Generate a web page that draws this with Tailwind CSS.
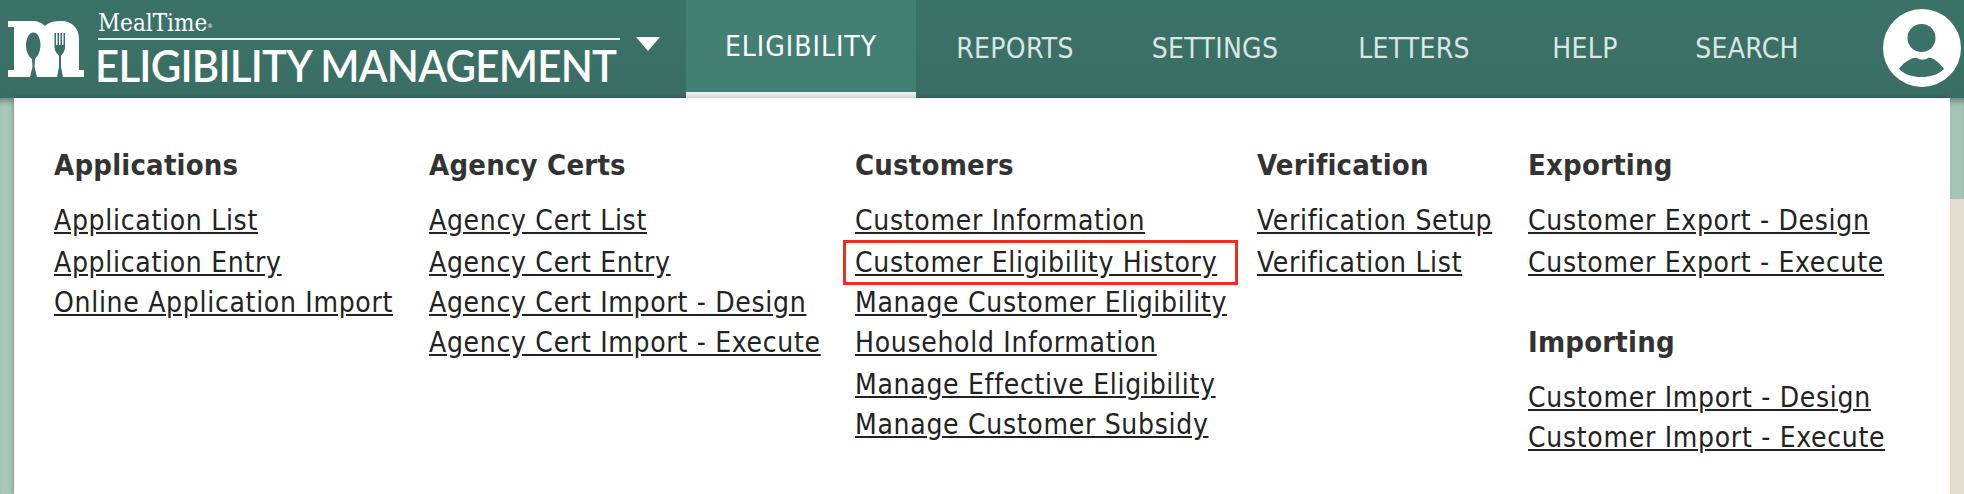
<!DOCTYPE html>
<html>
<head>
  <meta charset="UTF-8">
  <title>Eligibility Management</title>
  <script src="https://cdn.jsdelivr.net/npm/@tailwindcss/browser@4"></script>
</head>
<body class="bg-white font-['DejaVu_Sans',sans-serif]">
<div class="w-[1964px] h-[494px] overflow-hidden flex flex-col">
  <header class="h-[98px] shrink-0 flex bg-gradient-to-b from-[#3b7268] to-[#3a6e65] text-[#dce6e3]">
    <a class="w-[686px] flex items-start">
      <svg class="ml-[8px] mt-[21px] w-[76px] h-[56px]" viewBox="0 0 76 56">
        <path fill="#fff" fill-rule="evenodd" d="M0 0H24C30 0 34 2 37 5C41 1 47 0 53 0C64 0 71 7 71 18V49H76V56H0V49H6V6H0Z
          M25.3 11.5C30 11.5 32.5 18 32.5 24C32.5 31 29 36 27 38L26.5 46L29 56H22L24.5 46L24 38C21 36 18 31 18 24C18 18 21 11.5 25.3 11.5Z
          M46.5 12H48V24H49.5V12H51V24H52.5V12H54V24H55.5V12H57V26C57 31 54 33 53 35L53 46L55 56H49L51 46L51 35C50 33 46.5 31 46.5 26Z"/>
      </svg>
      <div class="ml-[14px] w-[522px] flex flex-col text-white">
        <div class="h-[25px] mt-[11px] font-['DejaVu_Serif',serif] [font-stretch:condensed] text-[24px] leading-[25px] whitespace-nowrap">MealTime<sup class="text-[6px]">®</sup></div>
        <div class="h-[2px] mt-[2px] bg-[#e8f0ee]"></div>
        <div class="mt-[2px] ml-[-3px] origin-left scale-x-[0.932] font-['Lato',sans-serif] text-[45px] leading-[46px] font-semibold whitespace-nowrap tracking-[-0.8px]">ELIGIBILITY MANAGEMENT</div>
      </div>
      <div class="ml-[16px] mt-[37px] w-0 h-0 border-x-[12px] border-x-transparent border-t-[14px] border-t-white"></div>
    </a>
    <nav class="flex text-[28px] [font-stretch:condensed] tracking-[0.3px]">
      <a class="w-[230px] h-[98px] pt-[26px] text-center text-white bg-[#447f73] border-b-[6px] border-[#eeeeee] tracking-[1px]">ELIGIBILITY</a>
      <a class="w-[198px] pt-[28px] text-center">REPORTS</a>
      <a class="w-[202px] pt-[28px] text-center">SETTINGS</a>
      <a class="w-[196px] pt-[28px] text-center">LETTERS</a>
      <a class="w-[146px] pt-[28px] text-center">HELP</a>
      <a class="w-[178px] pt-[28px] text-center">SEARCH</a>
    </nav>
    <svg class="ml-[47px] mt-[9px] w-[78px] h-[78px]" viewBox="0 0 78 78">
      <circle cx="39" cy="39" r="39" fill="#fff"/>
      <circle cx="38.5" cy="29" r="14" fill="#3b7268"/>
      <path fill="#3b7268" d="M16 60C22 52 30 48 34 49C37 51 42 51 45 49C49 48 56 53 61 60C55 66 47 68 38.5 68C30 68 22 66 16 60Z"/>
    </svg>
  </header>
  <div class="flex-1 flex">
    <div class="w-[14px] bg-[#a9c7ba] shadow-[inset_0_7px_6px_-4px_rgba(0,0,0,0.35)]"></div>
    <main class="flex-1 bg-white flex text-[#222222] text-[28px] tracking-[0.7px] [font-stretch:condensed] shadow-[0_0_6px_rgba(0,0,0,0.25)]">
      <section class="ml-[40px] w-[375px]">
        <h3 class="mt-[46px] h-[40px] font-bold text-[#333333] text-[29px] tracking-[0.2px]">Applications</h3>
        <ul class="mt-[16px]">
          <li class="h-[42px] underline">Application List</li>
          <li class="h-[40px] underline">Application Entry</li>
          <li class="h-[40px] underline">Online Application Import</li>
        </ul>
      </section>
      <section class="w-[426px]">
        <h3 class="mt-[46px] h-[40px] font-bold text-[#333333] text-[29px] tracking-[0.2px]">Agency Certs</h3>
        <ul class="mt-[16px]">
          <li class="h-[42px] underline">Agency Cert List</li>
          <li class="h-[40px] underline">Agency Cert Entry</li>
          <li class="h-[40px] underline">Agency Cert Import - Design</li>
          <li class="h-[42px] underline">Agency Cert Import - Execute</li>
        </ul>
      </section>
      <section class="w-[402px]">
        <h3 class="mt-[46px] h-[40px] font-bold text-[#333333] text-[29px] tracking-[0.2px]">Customers</h3>
        <ul class="mt-[16px]">
          <li class="h-[42px] underline">Customer Information</li>
          <li class="h-[40px] underline relative">Customer Eligibility History
            <span class="absolute left-[-12px] top-[-2px] w-[395px] h-[45px] border-[3px] border-[#f5291f]"></span>
          </li>
          <li class="h-[40px] underline">Manage Customer Eligibility</li>
          <li class="h-[42px] underline">Household Information</li>
          <li class="h-[40px] underline">Manage Effective Eligibility</li>
          <li class="h-[40px] underline">Manage Customer Subsidy</li>
        </ul>
      </section>
      <section class="w-[271px]">
        <h3 class="mt-[46px] h-[40px] font-bold text-[#333333] text-[29px] tracking-[0.2px]">Verification</h3>
        <ul class="mt-[16px]">
          <li class="h-[42px] underline">Verification Setup</li>
          <li class="h-[40px] underline">Verification List</li>
        </ul>
      </section>
      <section>
        <h3 class="mt-[46px] h-[40px] font-bold text-[#333333] text-[29px] tracking-[0.2px]">Exporting</h3>
        <ul class="mt-[16px]">
          <li class="h-[42px] underline">Customer Export - Design</li>
          <li class="h-[40px] underline">Customer Export - Execute</li>
        </ul>
        <h3 class="mt-[39px] h-[40px] font-bold text-[#333333] text-[29px] tracking-[0.2px]">Importing</h3>
        <ul class="mt-[16px]">
          <li class="h-[40px] underline">Customer Import - Design</li>
          <li class="h-[40px] underline">Customer Import - Execute</li>
        </ul>
      </section>
    </main>
    <div class="w-[14px] flex flex-col">
      <div class="h-[101px] bg-[#a3c4b7] shadow-[inset_0_7px_6px_-4px_rgba(0,0,0,0.35)]"></div>
      <div class="flex-1 bg-[#e2ddd0]"></div>
    </div>
  </div>
</div>
</body>
</html>
